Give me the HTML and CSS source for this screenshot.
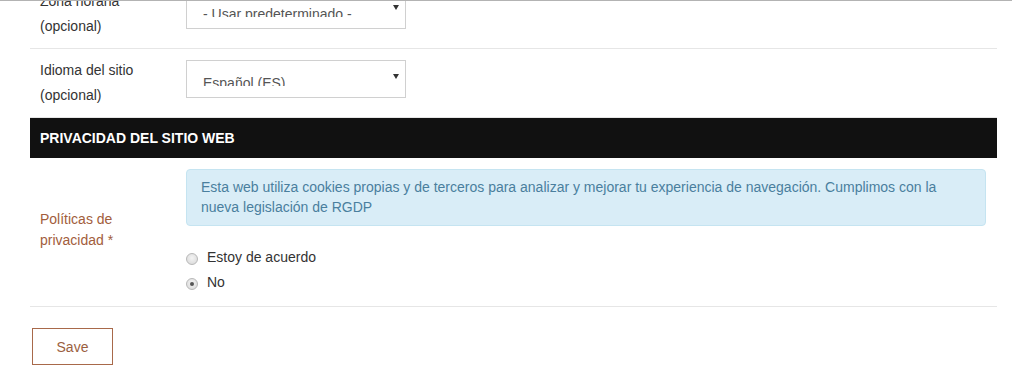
FILE: index.html
```html
<html>
<head>
<meta charset="UTF-8">
<link rel="stylesheet" href="styles.css">
</head>
<body>

<div class="topbar"></div>

<div class="page">

<div class="row first">
<div class="row-label">Zona horaria<br>(opcional)</div>
<div class="row-field">
<div class="select"><span class="select-value">- Usar predeterminado -</span><span class="caret"></span></div>
</div>
</div>

<div class="row">
<div class="row-label">Idioma del sitio<br>(opcional)</div>
<div class="row-field">
<div class="select"><span class="select-value">Español (ES)</span><span class="caret"></span></div>
</div>
</div>

<div class="section-title">PRIVACIDAD DEL SITIO WEB</div>

<div class="row privacy">
<div class="row-label required">Políticas de<br>privacidad *</div>
<div class="row-field">
<div class="alert">Esta web utiliza cookies propias y de terceros para analizar y mejorar tu experiencia de navegación. Cumplimos con la nueva legislación de RGDP</div>
<div class="radios">
<label class="radio-item"><span class="radio"></span>Estoy de acuerdo</label>
<label class="radio-item"><span class="radio checked"></span>No</label>
</div>
</div>
</div>

<button class="save">Save</button>

</div>

</body>
</html>
```

FILE: styles.css
```css
body {
   margin: 0;
   background: #ffffff;
   font-family: 'Liberation Sans', Arial, sans-serif;
   font-size: 14px;
   color: #333333;
}
.topbar {
   position: fixed;
   top: 0;
   left: 0;
   right: 0;
   border-top: 1px solid #b3b3b3;
}
.page {
   margin-left: 30px;
   width: 967px;
   margin-top: -20px;
}
.row {
   display: flex;
   border-bottom: 1px solid #e6e6e6;
}
.row-label {
   width: 156px;
   box-sizing: border-box;
   padding: 9px 10px 9px 10px;
   line-height: 25px;
}
.row-field {
   flex: 1;
   padding-top: 11px;
}
.select {
   width: 220px;
   height: 38px;
   box-sizing: border-box;
   border: 1px solid #d0d0d0;
   padding: 0 6px 0 16px;
   display: flex;
   justify-content: space-between;
   align-items: flex-start;
}
.select-value {
   display: block;
   margin-top: 15px;
   height: 10px;
   line-height: 14px;
   overflow: hidden;
   color: #555555;
}
.caret {
   margin-top: 13px;
   width: 0;
   height: 0;
   border-left: 3px solid transparent;
   border-right: 3px solid transparent;
   border-top: 5px solid #333333;
}
.section-title {
   background: #111111;
   color: #ffffff;
   font-weight: bold;
   font-size: 14px;
   height: 40px;
   line-height: 40px;
   padding-left: 10px;
}
.privacy .row-label {
   align-self: center;
   padding-top: 0;
   padding-bottom: 4px;
   line-height: 21px;
}
.required {
   color: #a25d3c;
}
.privacy .row-field {
   padding-right: 11px;
   padding-bottom: 12px;
}
.alert {
   background: #d9edf7;
   border: 1px solid #c5e4f1;
   border-radius: 4px;
   color: #4a7f9e;
   line-height: 20px;
   padding: 7px 14px 8px 14px;
}
.radios {
   margin-top: 18px;
}
.radio-item {
   display: flex;
   align-items: center;
   height: 25px;
}
.radio {
   width: 10px;
   height: 10px;
   border: 1px solid #b8b8b8;
   border-radius: 50%;
   background: radial-gradient(circle at 50% 40%, #f4f4f4, #d6d6d6);
   margin: 4px 9px 0 0;
   display: flex;
   align-items: center;
   justify-content: center;
}
.radio.checked::after {
   content: "";
   width: 4px;
   height: 4px;
   border-radius: 50%;
   background: #555555;
}
.save {
   margin: 21px 0 0 2px;
   width: 81px;
   height: 37px;
   background: #ffffff;
   border: 1px solid #a8694a;
   color: #9b5f3f;
   font-family: 'Liberation Sans', Arial, sans-serif;
   font-size: 14px;
}
```
